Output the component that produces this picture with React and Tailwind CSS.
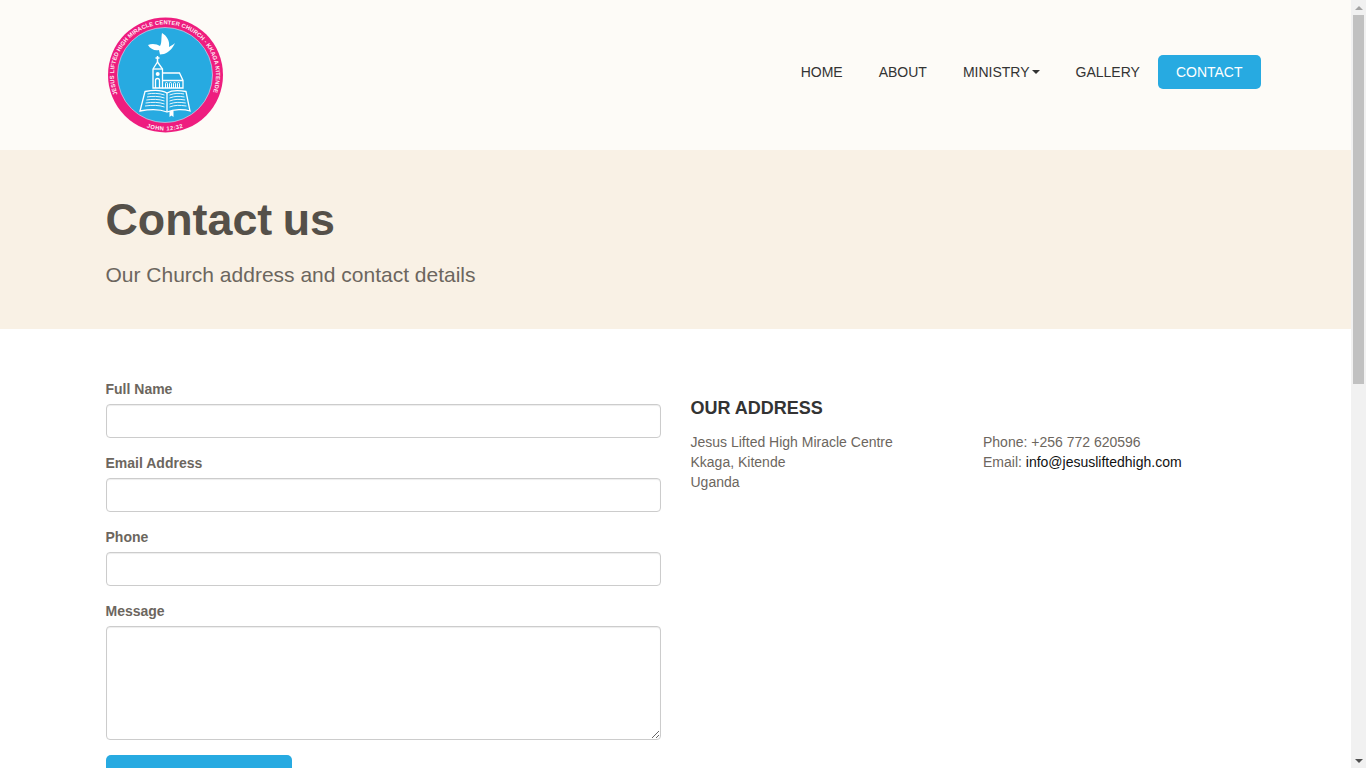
const FONT = { fontFamily: '"Liberation Sans", Arial, sans-serif' }

function Logo() {
  return (
    <svg width="116" height="116" viewBox="0 0 116 116" className="block" style={FONT}>
      <defs>
        <path id="ring-top" d="M 10.6 77.2 A 51 51 0 1 1 105.4 77.2" />
        <path id="ring-bottom" d="M 22 100 A 55 55 0 0 0 94 100" />
      </defs>
      <circle cx="58.5" cy="58" r="57.5" fill="#ee1d7f" />
      <circle cx="58" cy="58" r="47.5" fill="#27aae1" stroke="#fbd3e6" strokeWidth="0.6" />
      <text fill="#fff" fontSize="5.8" fontWeight="700" opacity="0.92">
        <textPath href="#ring-top" textLength="196">JESUS LIFTED HIGH MIRACLE CENTER CHURCH - KKAGA KITENDE</textPath>
      </text>
      <text fill="#fff" fontSize="5.8" fontWeight="700" textAnchor="middle" letterSpacing="0.5" opacity="0.92">
        <textPath href="#ring-bottom" startOffset="50%">JOHN 12:32</textPath>
      </text>
      {/* dove */}
      <path d="M41 28C45 26 50 27 53 29C55 26 54 21 55 16C60 19 63 24 62 30C64 29 67 27 68 26C66 31 62 35 57 37L53 37.500L52 33C48 34 43 32 41 28Z" fill="#fff" />
      {/* church */}
      <g fill="none" stroke="#fff" strokeWidth="1.300">
        <path d="M50.500 39V45M48.500 41H52.500" strokeWidth="1.500" />
        <path d="M46 52L50.500 45L55.500 52V71H46Z" />
        <path d="M46 52H55.500" />
        <circle cx="50.700" cy="57" r="2" fill="#fff" stroke="none" />
        <path d="M48.500 71V63.500A2 2 0 0 1 52.500 63.500V71" />
        <path d="M55.500 56H72.500L76 63.500V71H55.500M55.500 63.500H76" />
        <path d="M58.500 71V66.500A1 1 0 0 1 60.500 66.500V71M62.500 71V66.500A1 1 0 0 1 64.500 66.500V71M66.500 71V66.500A1 1 0 0 1 68.500 66.500V71M70.500 71V66.500A1 1 0 0 1 72.500 66.500V71" strokeWidth="1" />
      </g>
      {/* open bible */}
      <g fill="none" stroke="#fff" strokeWidth="1.300">
        <path d="M60 76C55 73 46 73 38 74.500L33 94C43 92 53 92 60 95C67 92 77 92 83 94L79 74.500C71 73 65 73 60 76Z" />
        <path d="M60 76V95" />
        <path d="M40.500 77C45 76 52 76 57.500 78M40 80C45 79 52 79 57.500 81M39.300 83C45 82 52 82 57.500 84M38.600 86C45 85 52 85 57.500 87M38 89C45 88 52 88 57.500 90" strokeWidth="0.900" />
        <path d="M62.500 78C68 76 72 76 77 77M62.500 81C68 79 72 79 77.500 80M62.500 84C68 82 72 82 78.200 83M62.500 87C68 85 72 85 78.800 86M62.500 90C68 88 72 88 79.500 89" strokeWidth="0.900" />
      </g>
      <path d="M62.500 94H66.500V100L64.500 98.500L62.500 100Z" fill="#fff" />
    </svg>
  )
}

function NavLink({ children, caret, active }) {
  return (
    <a
      href="#"
      className={
        active
          ? 'flex h-[34px] items-center rounded-[5px] bg-[#27aae1] px-[18px] text-white'
          : 'flex h-[34px] items-center px-[18px] text-[#333]'
      }
    >
      {children}
      {caret && (
        <span className="mb-px ml-[2px] inline-block border-x-[4.3px] border-t-[4.3px] border-x-transparent border-t-[#333]" />
      )}
    </a>
  )
}

function Field({ label, children }) {
  return (
    <div className="mb-[15px]">
      <label className="mb-[5px] block h-5 text-sm font-bold leading-5 text-[#6c665e]">{label}</label>
      {children}
    </div>
  )
}

const inputClass = 'block w-full rounded-[4px] border border-[#ccc] bg-white shadow-[inset_0_1px_1px_rgba(0,0,0,0.075)]'

function Scrollbar() {
  return (
    <div className="flex h-screen w-[15px] shrink-0 flex-col items-center bg-[#f1f1f1]">
      <div className="flex h-[15px] w-full shrink-0 items-center justify-center">
        <span className="border-x-[4px] border-b-[4px] border-x-transparent border-b-[#a3a3a3]" />
      </div>
      <div className="h-[369px] w-[11px] shrink-0 bg-[#c1c1c1]" />
      <div className="flex-1" />
      <div className="flex h-[15px] w-full shrink-0 items-center justify-center">
        <span className="border-x-[4px] border-t-[4px] border-x-transparent border-t-[#505050]" />
      </div>
    </div>
  )
}

export default function App() {
  return (
    <div className="flex h-screen overflow-hidden bg-white" style={FONT}>
      <div className="min-w-0 flex-1 overflow-hidden">
        {/* Top nav */}
        <header className="h-[150px] bg-[#fdfbf7]">
          <div className="mx-auto flex h-full w-[1170px] items-start justify-between pl-[16.500px]">
            <div className="pt-[17px]">
              <Logo />
            </div>
            <nav className="mt-[55px] flex text-sm">
              <NavLink>HOME</NavLink>
              <NavLink>ABOUT</NavLink>
              <NavLink caret>MINISTRY</NavLink>
              <NavLink>GALLERY</NavLink>
              <NavLink active>CONTACT</NavLink>
            </nav>
          </div>
        </header>

        {/* Page title */}
        <section className="h-[179px] bg-[#f9f1e5]">
          <div className="mx-auto w-[1170px] px-[15px] pt-[42px]">
            <h1 className="text-[44.800px] font-bold leading-[55px] text-[#555049] [word-spacing:-2px]">Contact us</h1>
            <p className="mt-[13px] text-[21px] leading-[30px] text-[#6c665e]">Our Church address and contact details</p>
          </div>
        </section>

        {/* Form and address */}
        <section className="mx-auto grid w-[1170px] grid-cols-2 pt-[50px]">
          <form className="px-[15px]">
            <Field label="Full Name">
              <input type="text" className={`${inputClass} h-[34px]`} />
            </Field>
            <Field label="Email Address">
              <input type="text" className={`${inputClass} h-[34px]`} />
            </Field>
            <Field label="Phone">
              <input type="text" className={`${inputClass} h-[34px]`} />
            </Field>
            <Field label="Message">
              <textarea className={`${inputClass} h-[114px]`} />
            </Field>
            <button type="button" className="h-[48px] w-[186px] rounded-[5px] bg-[#27aae1]" />
          </form>

          <div className="px-[15px] pt-[18px]">
            <h3 className="text-lg font-bold leading-[22px] text-[#333]">OUR ADDRESS</h3>
            <div className="mt-[13px] grid grid-cols-2 text-sm leading-5 text-[#6c665e]">
              <div>
                <p>Jesus Lifted High Miracle Centre</p>
                <p>Kkaga, Kitende</p>
                <p>Uganda</p>
              </div>
              <div className="pl-[15px]">
                <p>Phone: +256 772 620596</p>
                <p>
                  Email: <a href="#" className="text-[#111]">info@jesusliftedhigh.com</a>
                </p>
              </div>
            </div>
          </div>
        </section>
      </div>
      <Scrollbar />
    </div>
  )
}
